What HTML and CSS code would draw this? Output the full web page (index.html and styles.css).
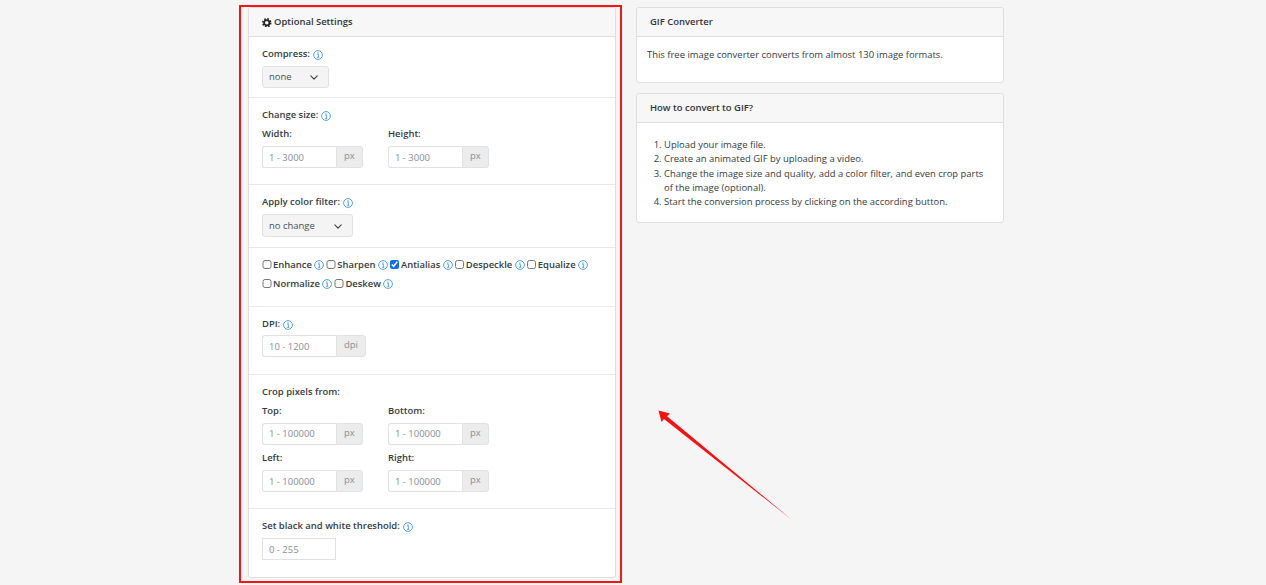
FILE: index.html
```html
<!DOCTYPE html>
<html lang="en">
<head>
<meta charset="utf-8">
<title>GIF Converter</title>
<link rel="stylesheet" href="styles.css">
</head>
<body>
<svg class="defs" width="0" height="0" aria-hidden="true">
  <symbol id="info" viewBox="0 0 10 10">
    <circle cx="5" cy="5" r="4.4" fill="none" stroke="#3d94ec" stroke-width="0.9"/>
    <circle cx="5" cy="2.9" r="0.65" fill="#3d94ec"/>
    <path d="M4.1 4.2H5.4V7.1H6.1M3.9 7.3H6.2" fill="none" stroke="#3d94ec" stroke-width="0.8"/>
  </symbol>
  <symbol id="chev" viewBox="0 0 10 6">
    <path d="M1 1l4 4 4-4" fill="none" stroke="#343a40" stroke-width="1.3" stroke-linecap="round" stroke-linejoin="round"/>
  </symbol>
</svg>
<main class="page">
  <section class="card card-main">
    <header class="card-head">
      <svg class="gear" viewBox="0 0 12 12" aria-hidden="true">
        <circle cx="6" cy="6" r="3.4" fill="none" stroke="#212529" stroke-width="2.2"/>
        <circle cx="6" cy="6" r="5" fill="none" stroke="#212529" stroke-width="2" stroke-dasharray="2.1 1.83"/>
      </svg>
      <span>Optional Settings</span>
    </header>

    <div class="sec sec-compress">
      <div class="lab">Compress:<svg class="i"><use href="#info"/></svg></div>
      <div class="sel sel-a"><span>none</span><svg class="chev"><use href="#chev"/></svg></div>
    </div>

    <div class="sec sec-size">
      <div class="lab">Change size:<svg class="i"><use href="#info"/></svg></div>
      <div class="cols">
        <div class="col">
          <div class="lab sub">Width:</div>
          <div class="group"><input class="inp" placeholder="1 - 3000"><span class="addon">px</span></div>
        </div>
        <div class="col">
          <div class="lab sub">Height:</div>
          <div class="group"><input class="inp" placeholder="1 - 3000"><span class="addon">px</span></div>
        </div>
      </div>
    </div>

    <div class="sec sec-filter">
      <div class="lab">Apply color filter:<svg class="i"><use href="#info"/></svg></div>
      <div class="sel sel-b"><span>no change</span><svg class="chev"><use href="#chev"/></svg></div>
    </div>

    <div class="sec sec-checks">
      <div class="checks">
        <label class="chk"><input type="checkbox">Enhance<svg class="i"><use href="#info"/></svg></label>
        <label class="chk"><input type="checkbox">Sharpen<svg class="i"><use href="#info"/></svg></label>
        <label class="chk"><input type="checkbox" checked>Antialias<svg class="i"><use href="#info"/></svg></label>
        <label class="chk"><input type="checkbox">Despeckle<svg class="i"><use href="#info"/></svg></label>
        <label class="chk"><input type="checkbox">Equalize<svg class="i"><use href="#info"/></svg></label>
        <label class="chk"><input type="checkbox">Normalize<svg class="i"><use href="#info"/></svg></label>
        <label class="chk"><input type="checkbox">Deskew<svg class="i"><use href="#info"/></svg></label>
      </div>
    </div>

    <div class="sec sec-dpi">
      <div class="lab">DPI:<svg class="i"><use href="#info"/></svg></div>
      <div class="group"><input class="inp" placeholder="10 - 1200"><span class="addon">dpi</span></div>
    </div>

    <div class="sec sec-crop">
      <div class="lab">Crop pixels from:</div>
      <div class="cols cols-first">
        <div class="col">
          <div class="lab sub">Top:</div>
          <div class="group"><input class="inp" placeholder="1 - 100000"><span class="addon">px</span></div>
        </div>
        <div class="col">
          <div class="lab sub">Bottom:</div>
          <div class="group"><input class="inp" placeholder="1 - 100000"><span class="addon">px</span></div>
        </div>
      </div>
      <div class="cols cols-next">
        <div class="col">
          <div class="lab sub">Left:</div>
          <div class="group"><input class="inp" placeholder="1 - 100000"><span class="addon">px</span></div>
        </div>
        <div class="col">
          <div class="lab sub">Right:</div>
          <div class="group"><input class="inp" placeholder="1 - 100000"><span class="addon">px</span></div>
        </div>
      </div>
    </div>

    <div class="sec sec-thresh">
      <div class="lab">Set black and white threshold:<svg class="i"><use href="#info"/></svg></div>
      <div class="group"><input class="inp inp-solo" placeholder="0 - 255"></div>
    </div>
  </section>

  <aside class="side">
    <section class="card">
      <header class="card-head head-side">GIF Converter</header>
      <div class="body-a">This free image converter converts from almost 130 image formats.</div>
    </section>
    <section class="card">
      <header class="card-head head-side">How to convert to GIF?</header>
      <ol class="steps">
        <li>Upload your image file.</li>
        <li>Create an animated GIF by uploading a video.</li>
        <li>Change the image size and quality, add a color filter, and even crop parts of the image (optional).</li>
        <li>Start the conversion process by clicking on the according button.</li>
      </ol>
    </section>
  </aside>
</main>

<div class="frame"></div>
<svg class="arrow" viewBox="0 0 140 120" aria-hidden="true">
  <path d="M0.5 0.5L12 3.5L9 6.2L134 110L6 9L3.5 12Z" fill="#fe0f0f"/>
</svg>
</body>
</html>
```

FILE: styles.css
```css
* { box-sizing: border-box; }
html, body { margin: 0; height: 585px; overflow: hidden; }
body {
  background: #f5f5f5;
  color: #343a40;
  font-family: "Open Sans", "Liberation Sans", sans-serif;
  font-size: 9.45px;
  line-height: 14.25px;
  position: relative;
}
.defs { position: absolute; }
.page {
  display: flex;
  align-items: flex-start;
  gap: 20px;
  padding: 7px 0 0 248px;
}
.card {
  background: #fff;
  border: 1px solid #dcdee0;
  border-radius: 3px;
  overflow: hidden;
}
.card-main { width: 368px; height: 571px; }
.card-head {
  height: 29px;
  background: #f7f7f7;
  border-bottom: 1px solid #dcdee0;
  display: flex;
  align-items: center;
  gap: 2.5px;
  padding: 1px 13px 0;
  font-weight: 600;
  color: #2f3439;
}
.gear { width: 9.5px; height: 9.5px; flex: none; }
.sec { padding: 10px 13px 0; border-bottom: 1px solid #e8e9ea; }
.sec:last-child { border-bottom: 0; }
.sec-compress { height: 61px; }
.sec-size { height: 87px; }
.sec-filter { height: 63px; }
.sec-checks { height: 59px; }
.sec-dpi { height: 68px; }
.sec-crop { height: 134px; }
.lab {
  display: flex;
  align-items: center;
  gap: 3px;
  height: 14px;
  padding-top: 1px;
  font-weight: 600;
}
.sub { margin: 5px 0 5px; }
.i { width: 10px; height: 10px; flex: none; }
.sel {
  display: flex;
  align-items: center;
  justify-content: space-between;
  background: #f4f4f4;
  border: 1px solid #dfe1e3;
  border-radius: 3px;
  margin-top: 5px;
  padding: 1px 10px 0 6px;
  color: #495057;
}
.sel-a { width: 67px; height: 22px; }
.sel-b { width: 91px; height: 23px; }
.chev { width: 8px; height: 5px; }
.cols { display: flex; }
.col { width: 126px; }
.cols-first .sub { margin-bottom: 4.5px; }
.cols-next .sub { margin-top: 6.5px; }
.group { display: flex; }
.sec-dpi .group { margin-top: 4px; }
.sec-thresh .group { margin-top: 5px; }
.inp {
  width: 74px;
  height: 22px;
  background: #fff;
  border: 1px solid #dfe1e3;
  border-right: 0;
  border-radius: 3px 0 0 3px;
  padding: 0 6px;
  font: inherit;
  color: #495057;
  outline: 0;
}
.inp-solo { border-right: 1px solid #dfe1e3; border-radius: 0; }
.inp::placeholder { color: #868e96; opacity: 1; }
.addon {
  display: flex;
  align-items: center;
  height: 22px;
  padding: 0 7px 1px;
  background: #ececec;
  border: 1px solid #dfe1e3;
  border-radius: 0 3px 3px 0;
  color: #868e96;
}
.checks { display: flex; flex-wrap: wrap; row-gap: 5px; column-gap: 2px; }
.chk {
  display: flex;
  align-items: center;
  height: 14px;
  font-weight: 600;
}
.chk input {
  width: 9.5px;
  height: 9.5px;
  margin: 0 1.5px 1px 0;
  accent-color: #0d6efd;
}
.chk .i { margin-left: 2.5px; }
.side { width: 368px; display: flex; flex-direction: column; gap: 10px; }
.body-a { height: 45px; padding: 11px 10px 0; }
.steps { margin: 0; height: 99px; padding: 15px 14px 0 27px; }
.frame {
  position: absolute;
  left: 239px;
  top: 5px;
  width: 383px;
  height: 578px;
  border: 2.5px solid #fb1414;
  pointer-events: none;
}
.arrow {
  position: absolute;
  left: 658px;
  top: 410px;
  width: 140px;
  height: 120px;
}
```
